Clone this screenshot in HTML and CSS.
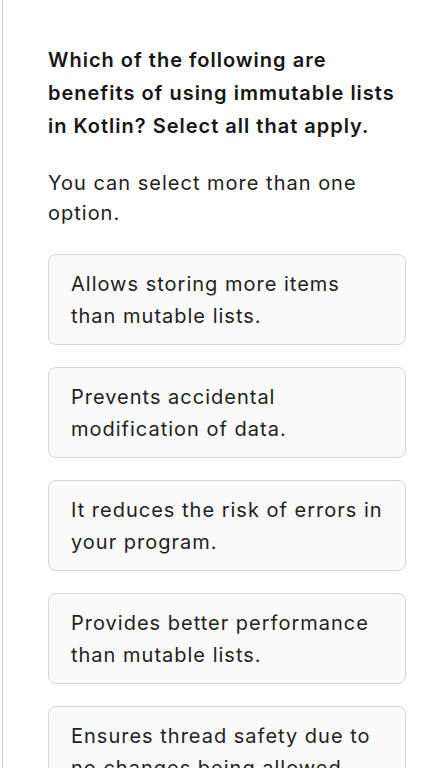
FILE: index.html
```html
<!DOCTYPE html>
<html lang="en">
<head>
	<meta charset="UTF-8">
	<meta name="viewport" content="width=device-width,initial-scale=1">
	<title>Quiz</title>
	<link rel="stylesheet" href="styles.css">
</head>
<body>
	<div class="page">
		<div class="question">
			<h2 class="question-title">Which of the following are benefits of using immutable lists in Kotlin? Select all that apply.</h2>
			<p class="question-hint">You can select more than one option.</p>
			<ul class="options">
				<li class="option">Allows storing more items than mutable lists.</li>
				<li class="option">Prevents accidental modification of data.</li>
				<li class="option">It reduces the risk of errors in your program.</li>
				<li class="option">Provides better performance than mutable lists.</li>
				<li class="option">Ensures thread safety due to no changes being allowed.</li>
			</ul>
		</div>
	</div>
</body>
</html>
```

FILE: styles.css
```css
*{
    margin: 0;
    padding: 0;
    box-sizing: border-box;
}
body{
    background: #fff;
    font-family: Inter, "Noto Sans", sans-serif;
    color: #1e1e1e;
    letter-spacing: 1px;
}
.page{
    margin-left: 2px;
    min-height: 100vh;
    border-left: 1px solid #d2d2d2;
    padding: 44px 41px 40px 45px;
}
.question-title{
    font-size: 20px;
    font-weight: 600;
    line-height: 33px;
    color: #161616;
}
.question-hint{
    margin-top: 25px;
    font-size: 20px;
    line-height: 30px;
    color: #222;
}
.options{
    list-style: none;
    margin-top: 26px;
    display: flex;
    flex-direction: column;
    gap: 22px;
}
.option{
    padding: 13px 22px 12px;
    border: 1px solid #d6d6d6;
    border-radius: 8px;
    background: #fafafa;
    font-size: 20px;
    line-height: 32px;
    color: #222;
}
```
